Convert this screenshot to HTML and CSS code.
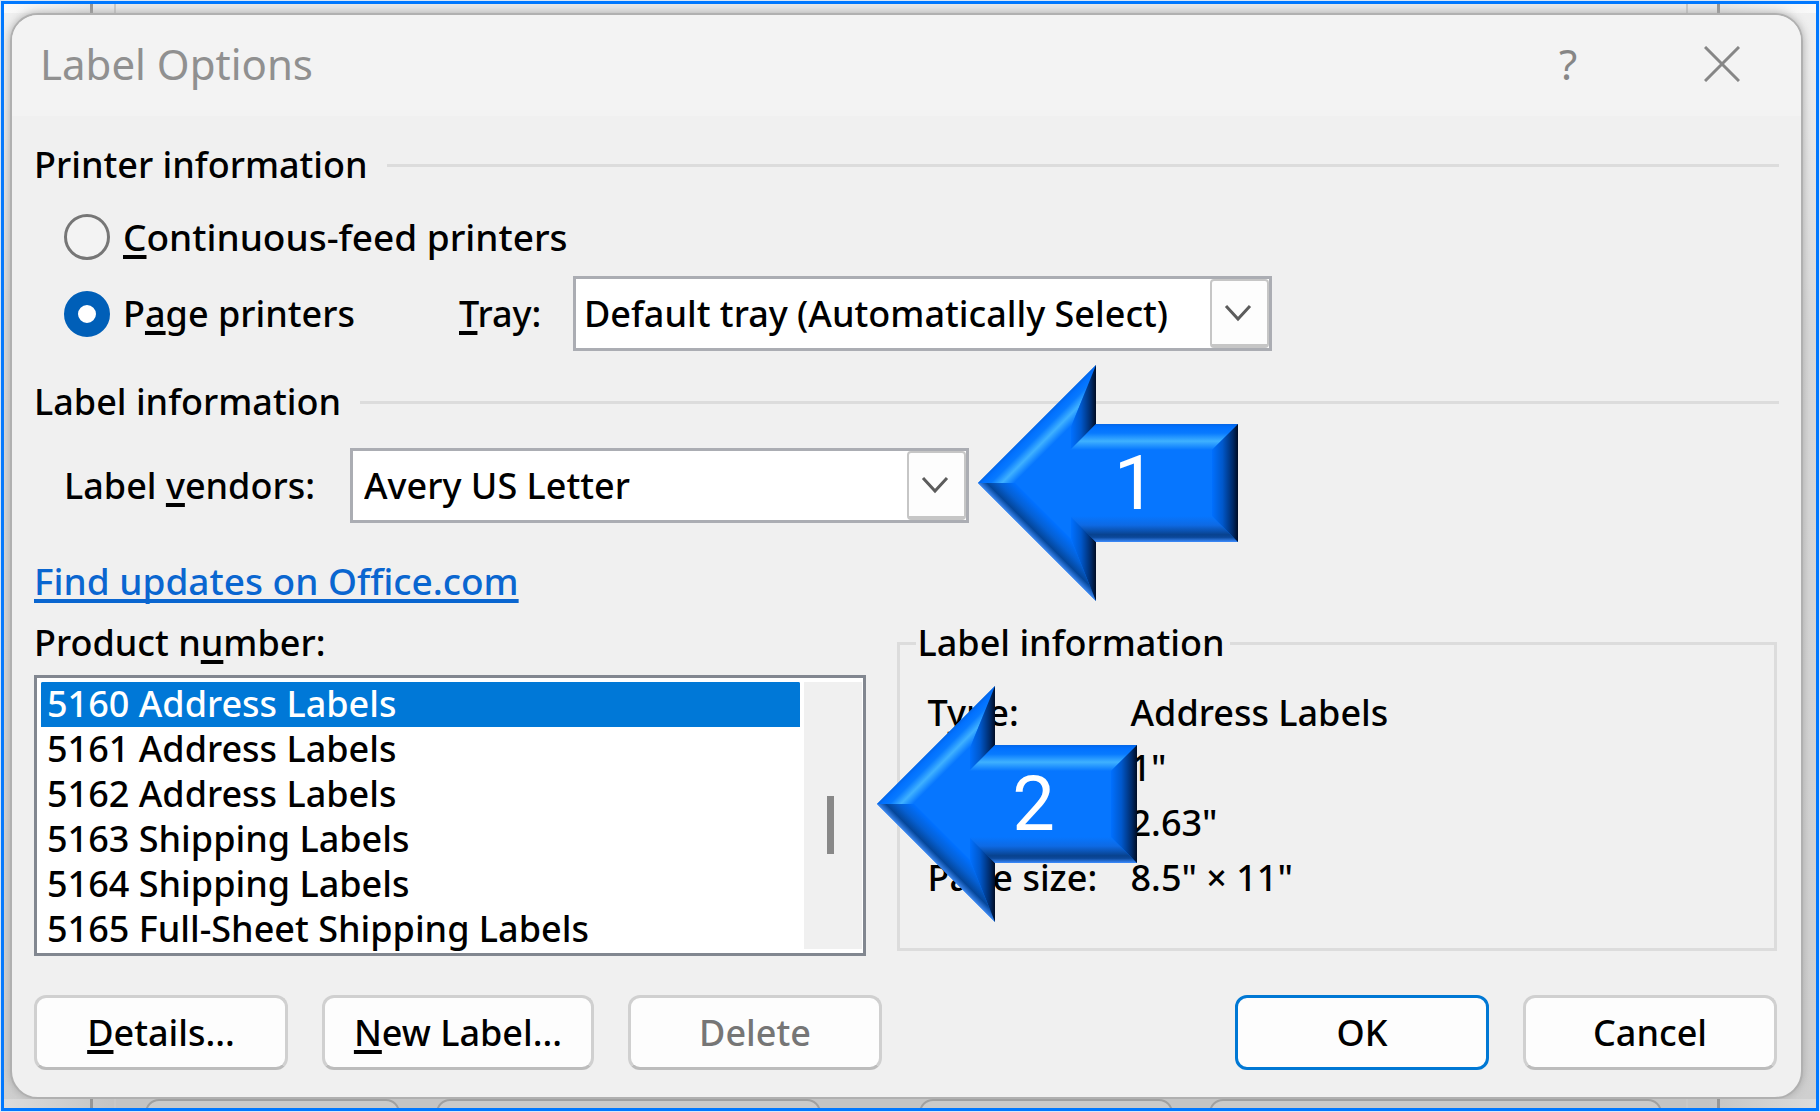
FILE: index.html
```html
<!DOCTYPE html>
<html lang="en">
<head>
<meta charset="utf-8">
<title>Label Options</title>
<link rel="stylesheet" href="styles.css">
</head>
<body>
<svg class="defs" aria-hidden="true">
  <defs>
    <linearGradient id="lit" x1="0" y1="0" x2="0" y2="1">
      <stop offset="0" stop-color="#0566e6"/><stop offset=".12" stop-color="#0070ff"/><stop offset=".35" stop-color="#087aff"/><stop offset=".66" stop-color="#3fb1ff"/><stop offset="1" stop-color="#0676ff"/>
    </linearGradient>
    <linearGradient id="shade" x1="0" y1="0" x2="0" y2="1">
      <stop offset="0" stop-color="#0676ff"/><stop offset=".35" stop-color="#0e6ae4"/><stop offset=".72" stop-color="#08428e"/><stop offset=".82" stop-color="#0b489a"/><stop offset="1" stop-color="#3c8cff"/>
    </linearGradient>
    <linearGradient id="dark" x1="0" y1="0" x2="1" y2="0">
      <stop offset="0" stop-color="#0070ff"/><stop offset=".4" stop-color="#0058cc"/><stop offset=".8" stop-color="#002a68"/><stop offset="1" stop-color="#000c24"/>
    </linearGradient>
    <linearGradient id="lit-diagonal" gradientUnits="userSpaceOnUse" x1="59" y1="59" x2="77" y2="77">
      <stop offset="0" stop-color="#0566e6"/><stop offset=".12" stop-color="#0070ff"/><stop offset=".35" stop-color="#087aff"/><stop offset=".66" stop-color="#3fb1ff"/><stop offset="1" stop-color="#0676ff"/>
    </linearGradient>
    <linearGradient id="shade-diagonal" gradientUnits="userSpaceOnUse" x1="77" y1="159" x2="59" y2="177">
      <stop offset="0" stop-color="#0070ff"/><stop offset=".4" stop-color="#0560d4"/><stop offset=".75" stop-color="#04469a"/><stop offset="1" stop-color="#3c86ee"/>
    </linearGradient>
    <symbol id="arrow" viewBox="0 0 260 236">
      <path d="M0 118L118 0V59H260V177H118V236Z" fill="#0676ff"/>
      <path d="M0 118L118 0L93 62L37 118Z" fill="url(#lit-diagonal)"/>
      <path d="M0 118H37L93 174L118 236Z" fill="url(#shade-diagonal)"/>
      <path d="M118 0V59L93 85V62Z" fill="url(#dark)"/>
      <path d="M118 236V177L93 151V174Z" fill="url(#dark)"/>
      <path d="M118 59H260L234 85H92Z" fill="url(#lit)"/>
      <path d="M92 151H234L260 177H118Z" fill="url(#shade)"/>
      <path d="M260 59V177L234 151V85Z" fill="url(#dark)"/>
    </symbol>
  </defs>
</svg>

<div class="frame">
  <div class="behind behind-top"><span class="rail rail-left"></span><span class="rail rail-right"></span></div>

  <main class="dialog">
    <header class="titlebar">
      <h1>Label Options</h1>
      <div class="window-controls">
        <button type="button" class="window-button">?</button>
        <button type="button" class="window-button" aria-label="Close">
          <svg width="36" height="36" viewBox="0 0 36 36"><path d="M1 1L35 35M35 1L1 35" fill="none" stroke="#868686" stroke-width="3"/></svg>
        </button>
      </div>
    </header>

    <form class="content">
      <h2 class="section-title">Printer information</h2>
      <div class="line feed-row">
        <input type="radio" name="printer" id="feed"><label for="feed"><u>C</u>ontinuous-feed printers</label>
      </div>
      <div class="line page-row">
        <input type="radio" name="printer" id="page" checked><label for="page" class="page-label">P<u>a</u>ge printers</label>
        <label for="tray" class="tray-label"><u>T</u>ray:</label>
        <div class="combo tray">
          <select id="tray"><option>Default tray (Automatically Select)</option></select>
          <span class="drop"><svg width="28" height="18" viewBox="0 0 28 18"><path d="M2 2L14 15L26 2" fill="none" stroke="#5c5c5c" stroke-width="3"/></svg></span>
        </div>
      </div>

      <h2 class="section-title second">Label information</h2>
      <div class="line vendor-row">
        <label for="vendor" class="vendor-label">Label <u>v</u>endors:</label>
        <div class="combo vendor">
          <select id="vendor"><option>Avery US Letter</option></select>
          <span class="drop"><svg width="28" height="18" viewBox="0 0 28 18"><path d="M2 2L14 15L26 2" fill="none" stroke="#5c5c5c" stroke-width="3"/></svg></span>
          <div class="callout callout-one"><svg width="260" height="236"><use href="#arrow"/></svg><span class="digit">1</span></div>
        </div>
      </div>

      <a class="updates" href="#">Find updates on Office.com</a>

      <div class="columns">
        <div class="products">
          <label for="product">Product n<u>u</u>mber:</label>
          <div class="listbox">
            <select id="product" size="6">
              <option selected>5160 Address Labels</option>
              <option>5161 Address Labels</option>
              <option>5162 Address Labels</option>
              <option>5163 Shipping Labels</option>
              <option>5164 Shipping Labels</option>
              <option>5165 Full-Sheet Shipping Labels</option>
            </select>
            <div class="track"><span class="thumb"></span></div>
            <div class="callout callout-two"><svg width="260" height="236"><use href="#arrow"/></svg><span class="digit">2</span></div>
          </div>
        </div>
        <fieldset class="details">
          <legend>Label information</legend>
          <dl>
            <dt>Type:</dt><dd>Address Labels</dd>
            <dd>1"</dd>
            <dd>2.63"</dd>
            <dt>Page size:</dt><dd>8.5" × 11"</dd>
          </dl>
        </fieldset>
      </div>

      <footer class="actions">
        <button type="button"><u>D</u>etails...</button>
        <button type="button" class="wide"><u>N</u>ew Label...</button>
        <button type="button" disabled>Delete</button>
        <button type="button" class="primary">OK</button>
        <button type="button">Cancel</button>
      </footer>
    </form>
  </main>

  <div class="behind behind-bottom">
    <span class="rail rail-left"></span>
    <div class="ghosts"><span class="ghost"></span><span class="ghost ghost-wide"></span><span class="ghost ghost-apart"></span><span class="ghost ghost-widest"></span></div>
    <span class="rail rail-right"></span>
  </div>
</div>
</body>
</html>
```
FILE: styles.css
```css
* { box-sizing: border-box; }

body {
  margin: 0;
  padding: 1px;
  background: #d9e6f6;
  font-family: "Noto Sans", "Open Sans", sans-serif;
  font-size: 36px;
  font-weight: 500;
  line-height: 48px;
  color: #000;
}

.defs { position: absolute; width: 0; height: 0; }

u {
  text-decoration-thickness: 4px;
  text-underline-offset: 4px;
  text-decoration-skip-ink: none;
}

.frame {
  display: flex;
  flex-direction: column;
  min-height: calc(100vh - 2px);
  border: 3px solid #0078ff;
  background: linear-gradient(#f0f0f0, #d8d8d8 30%, #cfcfcf);
}

/* slivers of the window underneath the dialog */
.behind {
  display: flex;
  justify-content: space-between;
  height: 9px;
  padding: 0 96px 0 86px;
  overflow: hidden;
}
.behind-top { background: linear-gradient(90deg, #fafafa, #e8e8e8 5%, #e8e8e8 95%, #fafafa); }
.behind-bottom { background: linear-gradient(90deg, #dcdcdc, #c4c4c4 6%, #c4c4c4 94%, #dcdcdc); }
.rail { width: 26px; height: 9px; flex: none; }
.rail-left { border-left: 3px solid #969696; border-right: 2px solid #c8c8c8; }
.rail-right { border-left: 2px solid #c8c8c8; border-right: 3px solid #969696; width: 34px; }
.ghosts { display: flex; flex: 1; gap: 36px; padding: 0 24px 0 29px; }
.ghost { flex: 253; height: 40px; border: 2px solid #a0a0a0; border-radius: 14px; background: #cacaca; }
.ghost-wide { flex: 385; }
.ghost-apart { margin-left: 62px; }
.ghost-widest { flex: 453; }

.dialog {
  flex: 1;
  margin: 0 13px 0 6px;
  border: 2px solid #b0b0b0;
  border-radius: 28px;
  background: #f0f0f0;
  box-shadow: 0 0 8px #a8a8a8;
}

.titlebar {
  display: flex;
  justify-content: space-between;
  align-items: center;
  height: 101px;
  padding: 0 61px 4px 28px;
  border-radius: 26px 26px 0 0;
  background: #f3f3f3;
  color: #909090;
}
h1 { margin: 0; font-size: 42px; line-height: 48px; font-weight: 400; }
.window-controls { display: flex; gap: 118px; }
.window-button {
  display: grid;
  place-items: center;
  width: 36px;
  height: 48px;
  padding: 0;
  border: 0;
  background: none;
  color: #868686;
  font: 42px/48px "Noto Sans", sans-serif;
}

.content { padding: 25px 22px 27px; }

.section-title {
  display: flex;
  align-items: center;
  gap: 19px;
  margin: 0;
  font: inherit;
}
.section-title::after { content: ""; flex: 1; height: 3px; background: #dcdcdc; }
.section-title.second { margin-top: 27px; }

.line { display: flex; align-items: center; padding-left: 30px; }
.feed-row { margin-top: 24px; font-size: 37px; }
.page-row { margin-top: 15px; }
.vendor-row { margin-top: 22px; }

input[type="radio"] {
  appearance: none;
  width: 46px;
  height: 46px;
  margin: 0 13px 0 0;
  border: 3px solid #767676;
  border-radius: 50%;
  background: #f3f3f3;
}
input[type="radio"]:checked { border: 14px solid #005fb8; background: #fff; }

.page-label { width: 336px; }
.tray-label { width: 114px; }
.vendor-label { width: 286px; }

.combo { position: relative; display: flex; height: 75px; }
.tray { width: 699px; }
.vendor { width: 619px; }
.combo select {
  appearance: none;
  width: 100%;
  padding: 0 66px 0 8px;
  border: 3px solid #abadb3;
  border-radius: 0;
  background: #fff;
  color: #000;
  font: inherit;
}
.vendor select { padding-left: 11px; }
.drop {
  position: absolute;
  top: 3px;
  right: 3px;
  bottom: 3px;
  display: grid;
  place-items: center;
  width: 59px;
  padding-right: 4px;
  border: 2px solid #c6c6c6;
  border-bottom-width: 4px;
  border-radius: 4px;
  background: #fdfdfd;
  pointer-events: none;
}

.updates {
  display: block;
  width: fit-content;
  margin-top: 34px;
  color: #0a66d0;
  font-size: 37px;
  text-decoration-thickness: 4px;
  text-underline-offset: 4px;
  text-decoration-skip-ink: none;
}

.columns { display: grid; grid-template-columns: 832fr 881fr; gap: 31px; margin-top: 14px; padding-right: 2px; }
.products label { display: block; }
.listbox {
  position: relative;
  display: flex;
  height: 281px;
  margin-top: 8px;
  padding: 4px 1px 0 4px;
  border: 3px solid #828790;
  background: #fff;
}
.listbox select {
  flex: 1;
  height: 271px;
  margin: 0 4px 0 0;
  padding: 0;
  border: 0;
  outline: 0;
  background: #fff;
  font: inherit;
  overflow: hidden;
  scrollbar-width: none;
}
.listbox option {
  display: flex;
  align-items: center;
  min-height: 44px;
  height: 45px;
  padding: 0 6px 2px;
  color: #000;
  font-weight: 500;
}
.listbox option:checked {
  background: #0078d7 linear-gradient(#0078d7, #0078d7);
  color: #fff;
  -webkit-text-fill-color: #fff;
}
.track { display: flex; justify-content: center; width: 58px; margin-bottom: 4px; padding-top: 114px; background: #f0f0f0; }
.thumb { width: 7px; height: 58px; margin-right: 4px; background: #888; }

.details { min-width: 0; margin: 0 0 5px; padding: 18px 0 0 28px; border: 3px solid #dcdcdc; }
.details legend { margin-left: -12px; padding: 0 5px 0 2px; }
dl { display: grid; grid-template-columns: 203px 1fr; margin: 0; line-height: 55px; }
dd { grid-column: 2; margin: 0; }

.actions { display: flex; gap: 34px; margin-top: 39px; padding-right: 2px; }
.actions button {
  width: 254px;
  height: 75px;
  padding: 0;
  border: 3px solid #d0d0d0;
  border-bottom-color: #bcbcbc;
  border-radius: 12px;
  background: #fdfdfd;
  color: #000;
  font: inherit;
}
.actions .wide { width: 272px; }
.actions button:disabled { color: #767676; }
.actions .primary { margin-left: auto; border-color: #0078d4; }

.callout { position: absolute; left: calc(100% + 9px); z-index: 1; width: 260px; height: 236px; }
.callout-one { top: -83px; }
.callout-two { top: 8px; left: calc(100% + 14px); }
.callout svg { display: block; }
.digit {
  position: absolute;
  inset: 76px 0 76px 54px;
  text-align: center;
  color: #fff;
  font: 76px/84px Roboto, sans-serif;
}
```
